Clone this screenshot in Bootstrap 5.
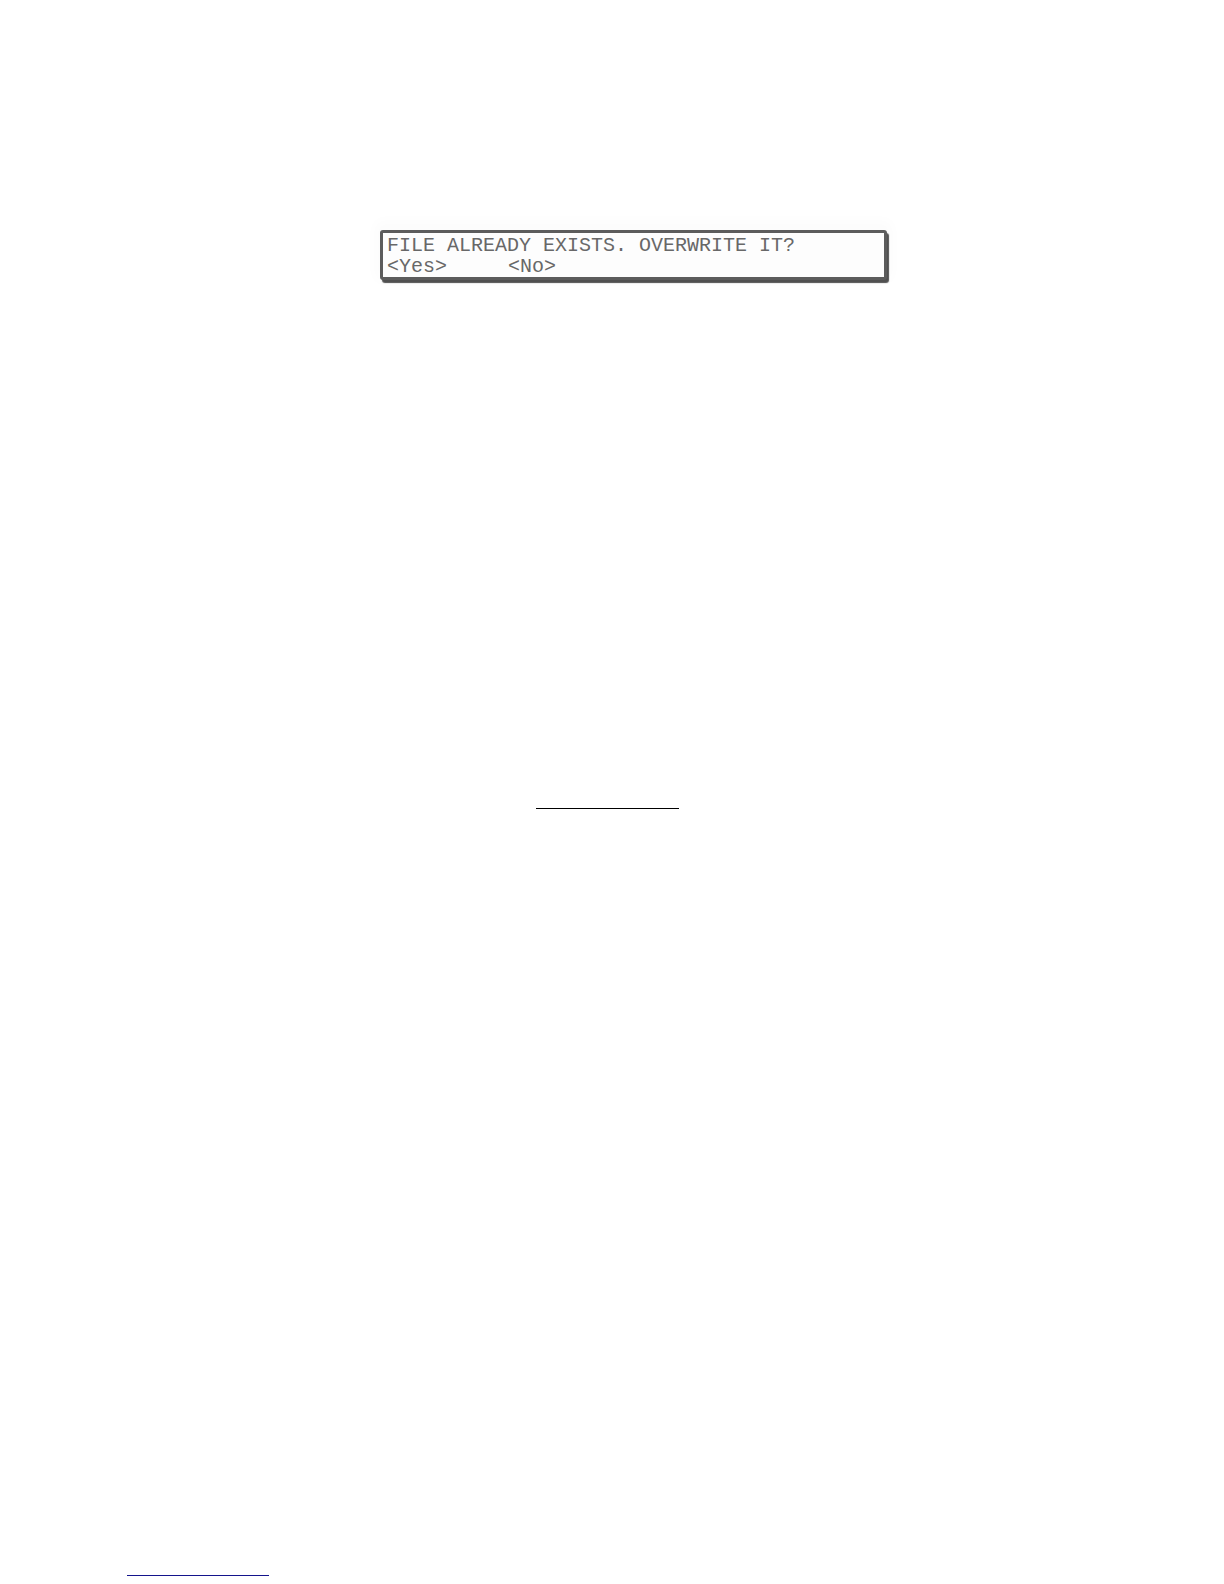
<!DOCTYPE html>
<html lang="en">
<head>
<meta charset="utf-8">
<meta name="viewport" content="width=device-width, initial-scale=1">
<title>File already exists</title>
<link href="https://cdn.jsdelivr.net/npm/bootstrap@5.3.0/dist/css/bootstrap.min.css" rel="stylesheet">
<style>
  .page-sheet { padding: 230px 127px 8px; }
  .prompt-row { padding-left: 253px; }
  .prompt-box {
    max-width: 507px;
    padding: 2px 4px 0;
    border: 3px solid #5c5c5c;
    border-radius: 3px;
    background: #fdfdfd;
    box-shadow: 2px 3px 1px #505050, 0 -4px 12px 6px #fcfcfc;
    color: #686868;
    font-family: "Liberation Mono", monospace;
    font-size: 20px;
  }
  .prompt-text { line-height: 22px; }
  .prompt-actions { gap: 61px; }
  .prompt-btn { line-height: 20px; color: inherit; }
  .short-rule { width: 142px; height: 1px; border: 0; opacity: 1; }
  .rule-middle { margin: 528px 0 0 409px; width: 143px; background: #000; }
  .rule-bottom { background: #14148c; }
</style>
<script defer src="https://cdn.jsdelivr.net/npm/bootstrap@5.3.0/dist/js/bootstrap.bundle.min.js"></script>
</head>
<body class="bg-white">
<div class="page-sheet min-vh-100 d-flex flex-column">
  <main class="prompt-row">
    <section class="prompt-box" role="alertdialog" aria-labelledby="promptText">
      <p class="prompt-text mb-0" id="promptText">FILE ALREADY EXISTS. OVERWRITE IT?</p>
      <div class="prompt-actions d-flex">
        <button type="button" class="prompt-btn border-0 bg-transparent p-0">&lt;Yes&gt;</button>
        <button type="button" class="prompt-btn border-0 bg-transparent p-0">&lt;No&gt;</button>
      </div>
    </section>
  </main>
  <hr class="short-rule rule-middle">
  <hr class="short-rule rule-bottom mt-auto mb-0">
</div>
</body>
</html>
